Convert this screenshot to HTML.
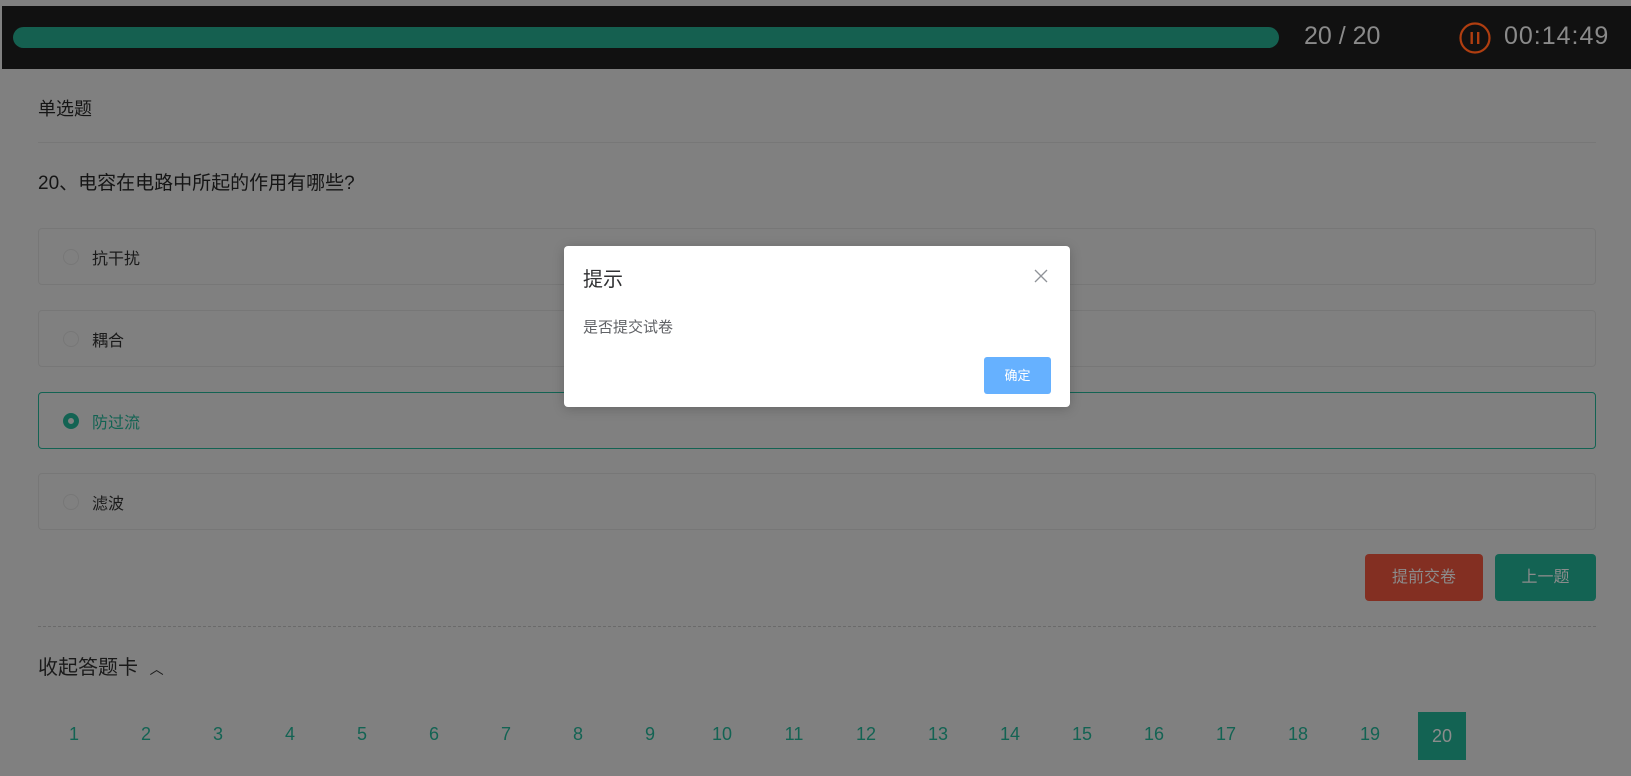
<!DOCTYPE html>
<html><head><meta charset="utf-8"><style>
*{margin:0;padding:0;box-sizing:border-box}
body{width:1631px;height:776px;background:#808080;position:relative;overflow:hidden;font-family:"Liberation Sans","Noto Sans CJK SC",sans-serif;color:#151515}
.abs{position:absolute}
.top{left:2px;top:6px;width:1629px;height:63px;background:#111}
.bar{left:13px;top:27px;width:1266px;height:21px;border-radius:11px;background:#156050}
.opt{left:38px;width:1558px;height:57px;border:1px solid #777;border-radius:4px}
.rad{left:24px;top:20px;width:16px;height:16px;border-radius:50%;border:1px solid #777}
.otx{left:53px;top:16px;font-size:16px;color:#1a1a1a}
.num{top:724px;width:40px;text-align:center;font-size:18px;color:#136353}
</style></head><body>
<div class="abs top"></div>
<div class="abs bar"></div>
<div class="abs" style="left:1304px;top:22px;font-size:25px;color:#8a8a8a;">20 / 20</div>
<svg class="abs" style="left:1458px;top:21px" width="34" height="34"><circle cx="17" cy="17" r="14.5" fill="none" stroke="#b03e10" stroke-width="2.2"/><rect x="12.5" y="11" width="2.4" height="12" fill="#b03e10"/><rect x="19" y="11" width="2.4" height="12" fill="#b03e10"/></svg>
<div class="abs" style="left:1504px;top:22px;font-size:25px;color:#8a8a8a;letter-spacing:1px">00:14:49</div>

<div class="abs" style="left:38px;top:95px;font-size:18px">单选题</div>
<div class="abs" style="left:38px;top:142px;width:1558px;height:1px;background:#777"></div>
<div class="abs" style="left:38px;top:168px;font-size:19px">20、电容在电路中所起的作用有哪些?</div>

<div class="abs opt" style="top:228px"><div class="abs rad"></div><div class="abs otx">抗干扰</div></div>
<div class="abs opt" style="top:310px"><div class="abs rad"></div><div class="abs otx">耦合</div></div>
<div class="abs opt" style="top:392px;border-color:#136353"><div class="abs rad" style="border:5px solid #136353;background:#808080"></div><div class="abs otx" style="color:#136353">防过流</div></div>
<div class="abs opt" style="top:473px"><div class="abs rad"></div><div class="abs otx">滤波</div></div>

<div class="abs" style="left:1365px;top:554px;width:118px;height:47px;background:#832f22;border-radius:4px;color:#8c8c8c;font-size:16px;text-align:center;line-height:47px">提前交卷</div>
<div class="abs" style="left:1495px;top:554px;width:101px;height:47px;background:#136353;border-radius:4px;color:#8c8c8c;font-size:16px;text-align:center;line-height:47px">上一题</div>
<div class="abs" style="left:38px;top:626px;width:1558px;border-top:1px dashed #6a6a6a"></div>
<div class="abs" style="left:38px;top:651px;font-size:20px;color:#1a1a1a">收起答题卡 <span style="font-size:14px;margin-left:6px">︿</span></div>

<div class="abs num" style="left:54px">1</div><div class="abs num" style="left:126px">2</div><div class="abs num" style="left:198px">3</div><div class="abs num" style="left:270px">4</div><div class="abs num" style="left:342px">5</div><div class="abs num" style="left:414px">6</div><div class="abs num" style="left:486px">7</div><div class="abs num" style="left:558px">8</div><div class="abs num" style="left:630px">9</div><div class="abs num" style="left:702px">10</div><div class="abs num" style="left:774px">11</div><div class="abs num" style="left:846px">12</div><div class="abs num" style="left:918px">13</div><div class="abs num" style="left:990px">14</div><div class="abs num" style="left:1062px">15</div><div class="abs num" style="left:1134px">16</div><div class="abs num" style="left:1206px">17</div><div class="abs num" style="left:1278px">18</div><div class="abs num" style="left:1350px">19</div>
<div class="abs" style="left:1418px;top:712px;width:48px;height:48px;background:#136353;color:#8c8c8c;font-size:18px;text-align:center;line-height:48px">20</div>

<div class="abs" style="left:564px;top:246px;width:506px;height:161px;background:#fff;border-radius:4px;box-shadow:0 2px 12px rgba(0,0,0,.2)">
<div class="abs" style="left:19px;top:17px;font-size:20px;color:#303133">提示</div>
<svg class="abs" style="left:470px;top:23px" width="14" height="14"><path d="M1 1L13 13M13 1L1 13" stroke="#909399" stroke-width="1.3"/></svg>
<div class="abs" style="left:19px;top:70px;font-size:15px;color:#606266">是否提交试卷</div>
<div class="abs" style="left:420px;top:111px;width:67px;height:37px;background:#66b1ff;border-radius:3px;color:#fff;font-size:13px;text-align:center;line-height:37px">确定</div>
</div>
</body></html>
